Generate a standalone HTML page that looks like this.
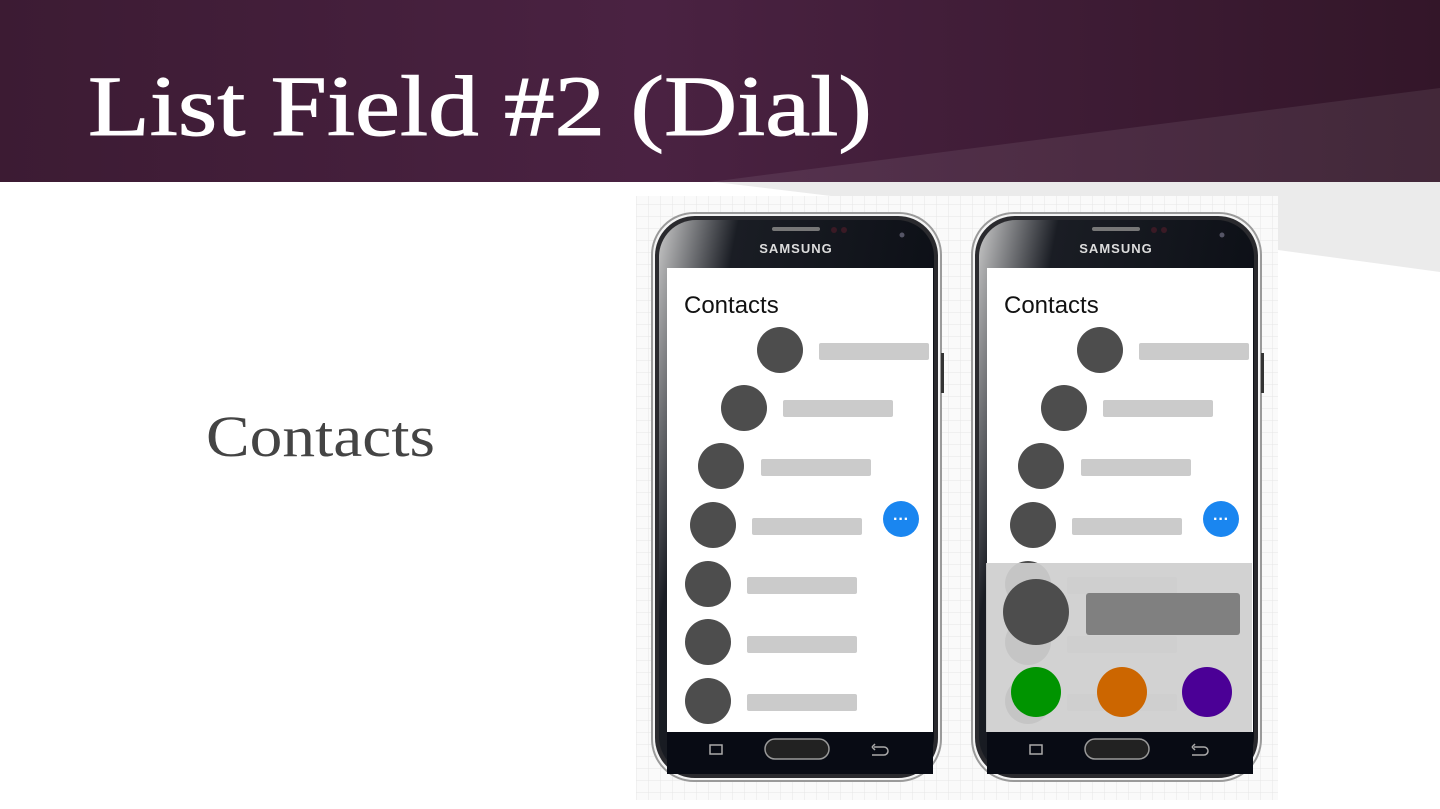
<!DOCTYPE html>
<html><head><meta charset="utf-8"><style>
html,body{margin:0;padding:0;width:1440px;height:809px;overflow:hidden;background:#fff;font-family:"Liberation Serif",serif}
</style></head><body>
<svg width="1440" height="809" viewBox="0 0 1440 809" xmlns="http://www.w3.org/2000/svg" style="position:absolute;left:0;top:0">
<defs>
<linearGradient id="hdr" x1="0" y1="0" x2="1" y2="0">
<stop offset="0" stop-color="#3c1b33"/><stop offset="0.45" stop-color="#4a2242"/><stop offset="1" stop-color="#331629"/>
</linearGradient>
<pattern id="grid" width="12" height="12" patternUnits="userSpaceOnUse">
<path d="M12 0H0V12" fill="none" stroke="#e6e6e6" stroke-width="1"/>
</pattern>
<linearGradient id="bez" x1="0" y1="0" x2="1" y2="0.4">
<stop offset="0" stop-color="#c8c8c8"/><stop offset="0.25" stop-color="#1a1d24"/><stop offset="1" stop-color="#0b0e15"/>
</linearGradient>
<g id="phone">
<rect x="0" y="0" width="289" height="568" rx="42" fill="#f4f4f4" stroke="#9a9a9a" stroke-width="2"/>
<rect x="3" y="3" width="283" height="562" rx="40" fill="#2a2a2e"/>
<rect x="7" y="7" width="275" height="554" rx="37" fill="url(#bez)"/>
<rect x="120" y="14" width="48" height="4" rx="2" fill="#777"/>
<circle cx="182" cy="17" r="3" fill="#3a1a25"/><circle cx="192" cy="17" r="3" fill="#3a1a25"/>
<circle cx="250" cy="22" r="2.5" fill="#556"/>
<text x="144" y="40" text-anchor="middle" font-family="Liberation Sans,sans-serif" font-weight="bold" font-size="13" fill="#ddd" letter-spacing="1">SAMSUNG</text>
<rect x="289" y="140" width="3" height="40" fill="#333"/>
<rect x="15" y="55" width="266" height="464" fill="#fff"/>
<rect x="15" y="519" width="266" height="42" fill="#080b14"/>
<rect x="113" y="526" width="64" height="20" rx="10" fill="#222" stroke="#999" stroke-width="1.5"/>
<rect x="58" y="532" width="12" height="9" fill="none" stroke="#aaa" stroke-width="1.5"/>
<path d="M222 534h10a4 4 0 0 1 0 8h-12M220 534l3-3M220 534l3 3" fill="none" stroke="#aaa" stroke-width="1.5"/>
<text x="32" y="100" font-family="Liberation Sans,sans-serif" font-size="24" fill="#111">Contacts</text>
</g>
<g id="rows">
<circle cx="128" cy="137" r="23" fill="#4d4d4d"/><rect x="167" y="130" width="110" height="17" rx="2" fill="#cbcbcb"/>
<circle cx="92" cy="195" r="23" fill="#4d4d4d"/><rect x="131" y="187" width="110" height="17" rx="2" fill="#cbcbcb"/>
<circle cx="69" cy="253" r="23" fill="#4d4d4d"/><rect x="109" y="246" width="110" height="17" rx="2" fill="#cbcbcb"/>
<circle cx="61" cy="312" r="23" fill="#4d4d4d"/><rect x="100" y="305" width="110" height="17" rx="2" fill="#cbcbcb"/>
<circle cx="56" cy="371" r="23" fill="#4d4d4d"/><rect x="95" y="364" width="110" height="17" rx="2" fill="#cbcbcb"/>
<circle cx="56" cy="429" r="23" fill="#4d4d4d"/><rect x="95" y="423" width="110" height="17" rx="2" fill="#cbcbcb"/>
<circle cx="56" cy="488" r="23" fill="#4d4d4d"/><rect x="95" y="481" width="110" height="17" rx="2" fill="#cbcbcb"/>
<circle cx="249" cy="306" r="18" fill="#1a86f0"/>
<text x="249" y="311" text-anchor="middle" font-family="Liberation Sans,sans-serif" font-size="16" fill="#fff" font-weight="bold">···</text>
</g>
</defs>
<rect x="0" y="0" width="1440" height="182" fill="url(#hdr)"/>
<polygon points="710,182 1440,88 1440,182" fill="#ffffff" fill-opacity="0.08"/>
<polygon points="715,182 1440,182 1440,272 1278,250" fill="#ebebeb"/>
<text x="88" y="135" font-family="Liberation Serif,serif" font-size="86" fill="#fff" stroke="#fff" stroke-width="1" textLength="784" lengthAdjust="spacingAndGlyphs">List Field #2 (Dial)</text>
<text x="206" y="456" font-family="Liberation Serif,serif" font-size="58" fill="#444" textLength="229" lengthAdjust="spacingAndGlyphs">Contacts</text>
<rect x="636" y="196" width="642" height="604" fill="#fafafa"/>
<rect x="636" y="196" width="642" height="604" fill="url(#grid)"/>
<g transform="translate(652,213)"><use href="#phone"/><use href="#rows"/></g>
<g transform="translate(972,213)"><use href="#phone"/><use href="#rows"/>
<rect x="14" y="350" width="266" height="169" fill="#cfcfcf" fill-opacity="0.93"/>
<circle cx="64" cy="399" r="33" fill="#4d4d4d"/>
<rect x="114" y="380" width="154" height="42" rx="3" fill="#808080"/>
<circle cx="64" cy="479" r="25" fill="#009400"/>
<circle cx="150" cy="479" r="25" fill="#cc6600"/>
<circle cx="235" cy="479" r="25" fill="#4b0096"/>
</g>
</svg>
</body></html>
